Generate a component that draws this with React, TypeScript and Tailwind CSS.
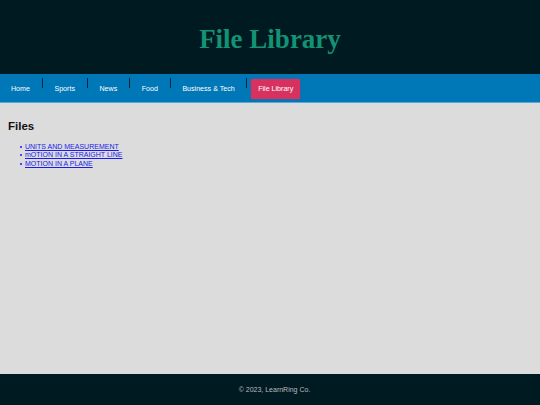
const navItems = ["Home", "Sports", "News", "Food", "Business & Tech"]

const files = ["UNITS AND MEASUREMENT", "mOTION IN A STRAIGHT LINE", "MOTION IN A PLANE"]

function Header() {
  return (
    <header className="bg-[#001a21] h-[74px] flex items-center justify-center pt-[4px]">
      <h1 className="font-['Liberation_Serif',serif] font-bold text-[27px] text-[#139274] leading-none">
        File Library
      </h1>
    </header>
  )
}

function Nav() {
  return (
    <nav className="bg-[#0077b6] h-[29px] border-b border-[#5aa9d6] flex items-start pl-[3px] font-['Liberation_Sans',sans-serif] text-[7.1px] text-white">
      {navItems.map((item) => (
        <div key={item} className="flex items-start">
          <a className="h-[28px] flex items-center px-[8px] pt-[2px]">{item}</a>
          <span className="w-px h-[10px] bg-[#0a2233] mt-[4px] mx-[3.75px]" />
        </div>
      ))}
      <a className="mt-[5px] h-[20px] flex items-center px-[7px] bg-[#d6315f] rounded-[1px] shadow-[0_0_2px_rgba(214,49,95,0.6)]">
        File Library
      </a>
    </nav>
  )
}

export default function App() {
  return (
    <div className="h-[405px] flex flex-col bg-[#dcdcdc] font-['Liberation_Sans',sans-serif]">
      <Header />
      <Nav />
      <main className="flex-1 px-[8px] pt-[18px]">
        <h2 className="text-[11.5px] font-bold text-[#111] leading-none">Files</h2>
        <ul className="pl-[12px] mt-[10px] text-[7px] leading-[8.5px]">
          {files.map((f) => (
            <li key={f} className="flex items-center gap-[3px]">
              <span className="w-[2px] h-[2px] rounded-full bg-[#1a1aee]" />
              <a className="text-[#1a1aee] underline">{f}</a>
            </li>
          ))}
        </ul>
      </main>
      <footer className="bg-[#001a21] h-[31px] flex items-center justify-center pt-[1px] pl-[9px] text-[7px] text-[#b8bcbf]">
        © 2023, LearnRing Co.
      </footer>
    </div>
  )
}
